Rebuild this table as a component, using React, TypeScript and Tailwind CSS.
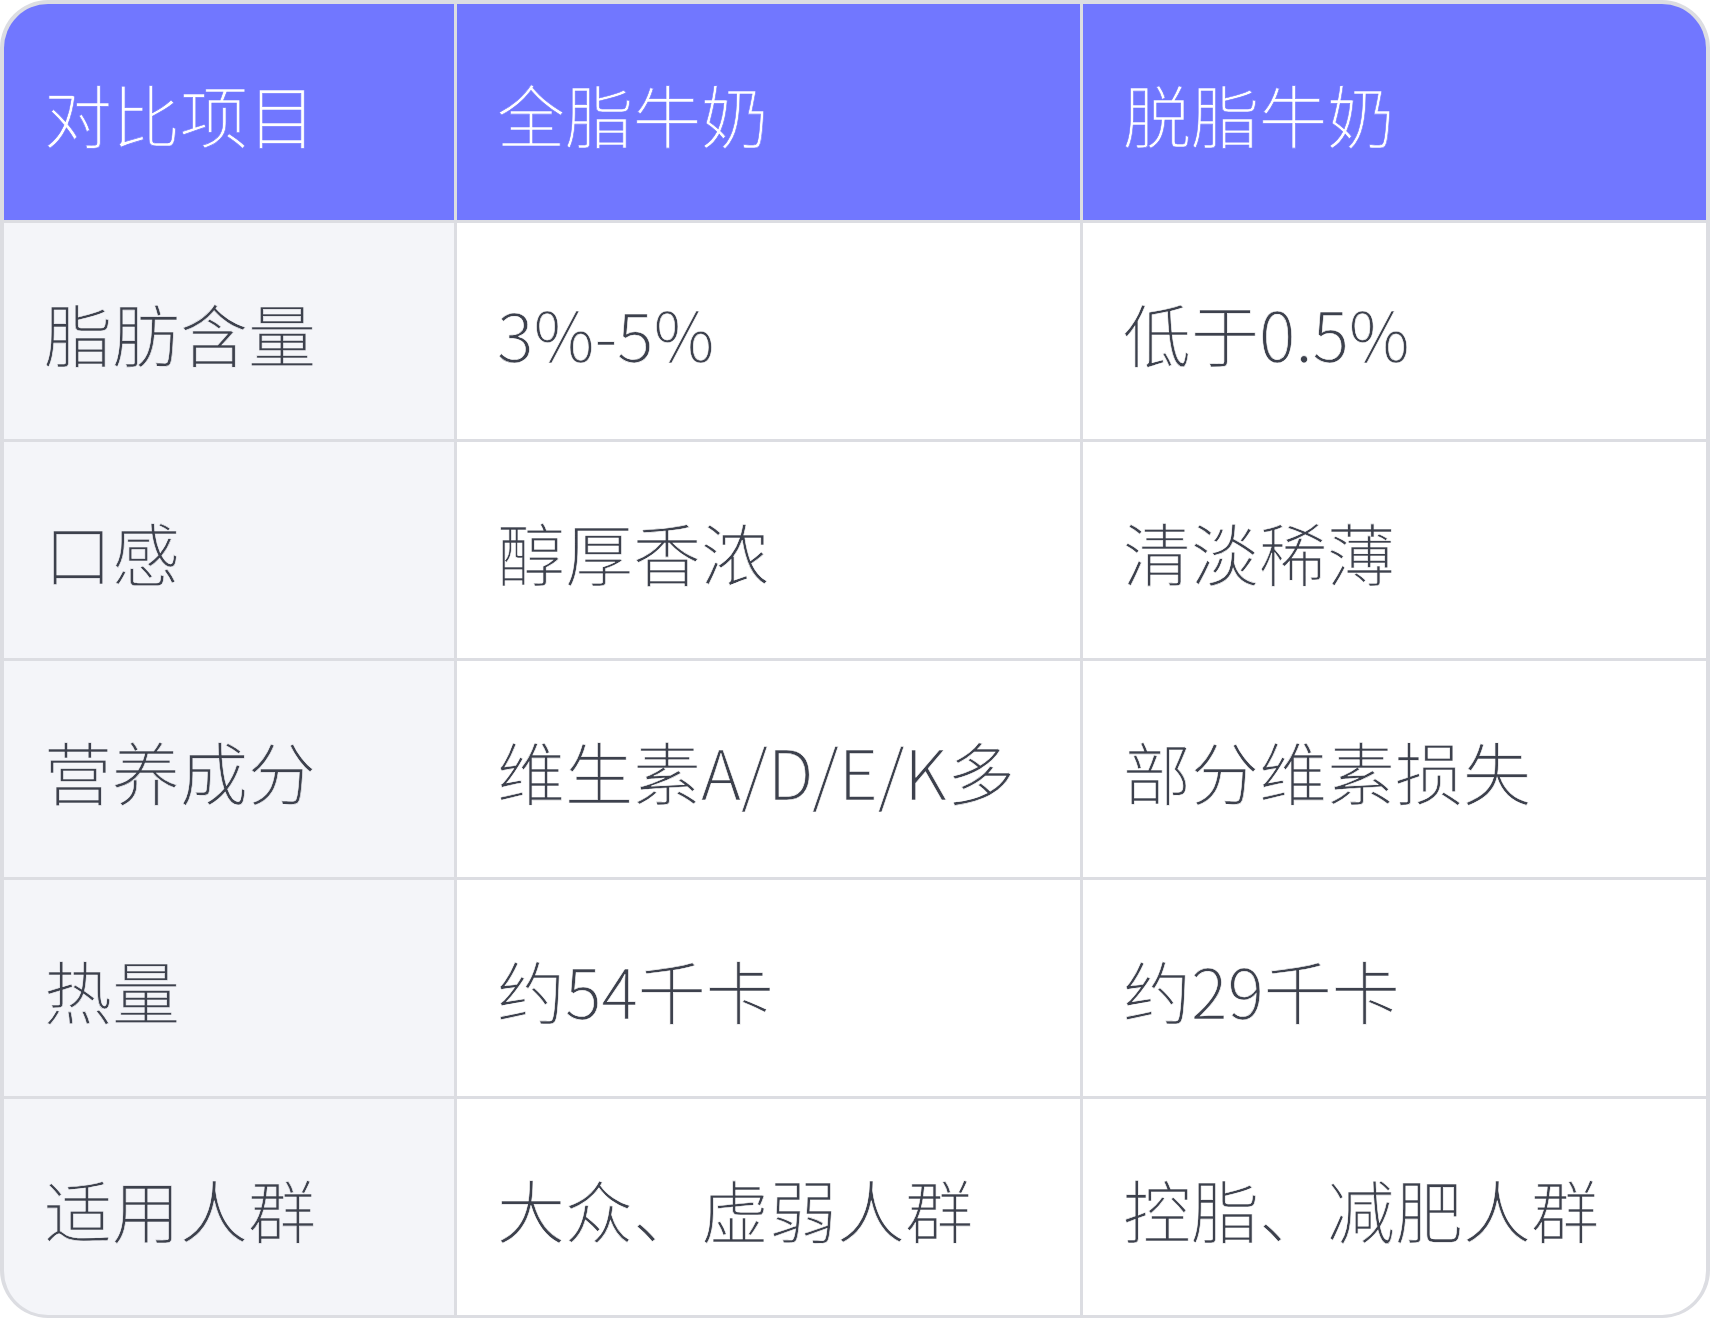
import React from "react";

const rows: [string, string, string][] = [
  ["脂肪含量", "3%-5%", "低于0.5%"],
  ["口感", "醇厚香浓", "清淡稀薄"],
  ["营养成分", "维生素A/D/E/K多", "部分维素损失"],
  ["热量", "约54千卡", "约29千卡"],
  ["适用人群", "大众、虚弱人群", "控脂、减肥人群"],
];

const font = {
  fontFamily: '"Noto Sans CJK SC", "Noto Sans", sans-serif',
};

export default function App() {
  return (
    <div className="w-[1710px] h-[1318px] bg-white" style={font}>
      <div className="w-full h-full rounded-[48px] overflow-hidden bg-[#dcdde2] pt-[4px] px-[4px] pb-[3px]">
        <div className="w-full h-full rounded-[44px] overflow-hidden grid grid-cols-[450px_623px_623px] grid-rows-[repeat(6,216px)] gap-[3px] bg-[#dcdde2]">
          {["对比项目", "全脂牛奶", "脱脂牛奶"].map((h) => (
            <div
              key={h}
              className="bg-[#7177ff] text-white flex items-center pl-[40px] pt-[3px] text-[68px] font-light [-webkit-text-stroke:0.6px_#7177ff]"
            >
              {h}
            </div>
          ))}
          {rows.map((r) =>
            r.map((c, i) => (
              <div
                key={r[0] + i}
                className={
                  i === 0
                    ? "bg-[#f4f5f9] text-[#3d414d] flex items-center pl-[40px] pt-[4px] text-[68px] font-light whitespace-nowrap [-webkit-text-stroke:0.6px_#f4f5f9]"
                    : "bg-white text-[#3d414d] flex items-center pl-[40px] pt-[4px] text-[68px] font-light whitespace-nowrap [-webkit-text-stroke:0.6px_#ffffff]"
                }
              >
                {c}
              </div>
            ))
          )}
        </div>
      </div>
    </div>
  );
}
